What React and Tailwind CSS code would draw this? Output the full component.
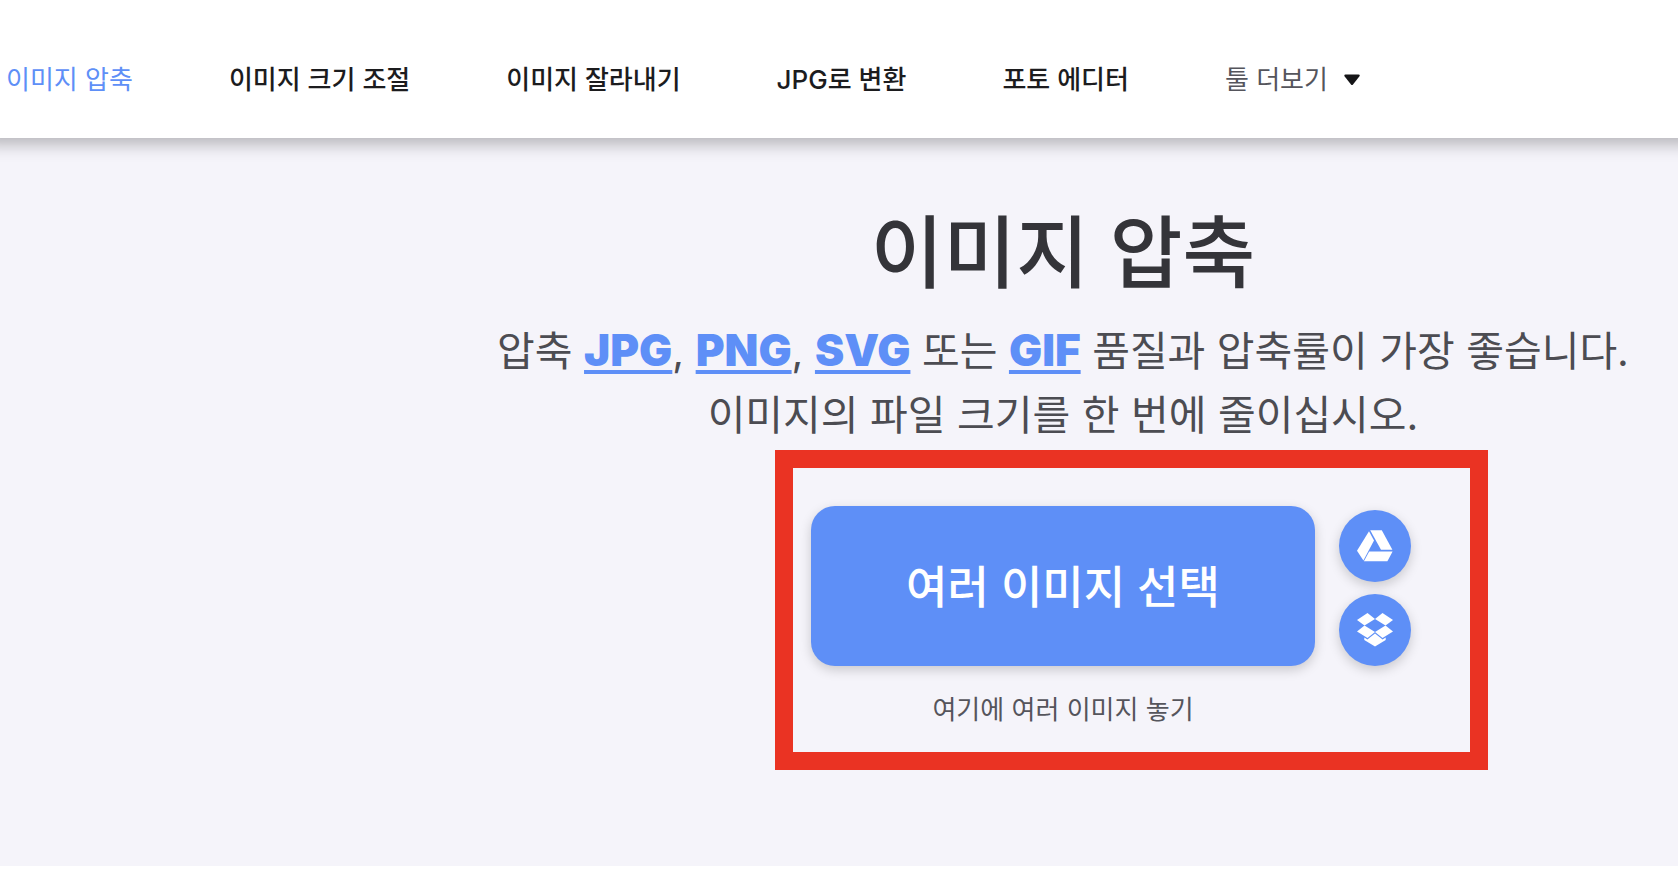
import React from 'react'

const NAV_ITEMS = [
  { label: '이미지 압축', active: true },
  { label: '이미지 크기 조절' },
  { label: '이미지 잘라내기' },
  { label: 'JPG로 변환' },
  { label: '포토 에디터' },
]

function DriveIcon() {
  return (
    <svg viewBox="0 0 36 32" className="w-9 h-8" fill="currentColor" aria-hidden="true">
      <path d="M13.2 0.3h11.6l10.6 19.5h-11.4z" />
      <path d="M12 1.2 17 10.5 6.4 30.5 0 20.8z" />
      <path d="M12.2 21.5h23.4l-5.2 9.7H6.9z" />
    </svg>
  )
}

function DropboxIcon() {
  return (
    <svg viewBox="0 0 36 34" className="w-9 h-8.5" fill="currentColor" aria-hidden="true">
      <path d="M10.5 0 18 6 7.5 12.5 0 7z" />
      <path d="M25.5 0 36 7l-7.5 5.5L18 6z" />
      <path d="M7.5 12.5 18 19l-7.5 6L0 18.5z" />
      <path d="M28.5 12.5 36 18.5 25.5 25 18 19z" />
      <path d="M18 20.4 25.6 26.4 28.7 24.6V27L18 33.4 7.3 27V24.6L10.4 26.4z" />
    </svg>
  )
}

function FormatLink({ children }) {
  return (
    <a href="#" className="font-[Inter] font-black text-[44px] text-[#5e8ff7] underline decoration-4 underline-offset-4 [text-decoration-skip-ink:none]">
      {children}
    </a>
  )
}

function SourceButton({ label, children }) {
  return (
    <button
      type="button"
      aria-label={label}
      className="flex size-18 items-center justify-center rounded-full bg-[#5e8ff7] text-white shadow-[0_4px_12px_rgba(0,0,0,0.18)]"
    >
      {children}
    </button>
  )
}

function Header() {
  return (
    <header className="relative z-10 bg-white px-1.5 pt-[67px] pb-[45px] shadow-[0_-10px_16px_16px_rgba(0,0,0,0.27)]">
      <nav className="flex items-center gap-24 whitespace-nowrap text-[26px] leading-[26px]">
        {NAV_ITEMS.map((item) => (
          <a key={item.label} href="#" className={item.active ? 'text-[#5e8ff7]' : 'font-medium text-[#1c1c1e]'}>
            {item.label}
          </a>
        ))}
        <button type="button" className="flex items-center gap-4 text-[#55555c]">
          툴 더보기
          <svg viewBox="0 0 16 11" className="w-4 h-3 text-[#151517]" fill="currentColor" aria-hidden="true">
            <path d="M1.5 0h13q2 0.2 0.8 2L9 10q-1 1-2 0L0.7 2Q-0.4 0.2 1.5 0z" />
          </svg>
        </button>
      </nav>
    </header>
  )
}

function Uploader() {
  return (
    <div className="mt-[3px] ml-[775px] mr-[190px] flex items-start gap-6 border-[18px] border-[#ea3323] px-[18px] pt-[38px] pb-6">
      <div className="flex flex-1 flex-col items-center gap-[26px]">
        <button
          type="button"
          className="h-40 w-full rounded-3xl bg-[#5e8ff7] pt-1 text-[45px] font-medium text-white shadow-[0_4px_12px_rgba(0,0,0,0.18)]"
        >
          여러 이미지 선택
        </button>
        <p className="text-[26px] leading-9 text-[#55555c]">여기에 여러 이미지 놓기</p>
      </div>
      <div className="mr-[41px] flex flex-col gap-3 pt-1">
        <SourceButton label="Google Drive"><DriveIcon /></SourceButton>
        <SourceButton label="Dropbox"><DropboxIcon /></SourceButton>
      </div>
    </div>
  )
}

export default function App() {
  return (
    <div className="min-h-screen bg-white font-['Inter','Noto_Sans_CJK_KR',sans-serif]">
      <Header />
      <main className="bg-[#f5f4fa] pt-16 pb-24">
        <div className="pl-[448px] text-center">
          <h1 className="text-[79px] leading-[102px] font-medium text-[#343439]">이미지 압축</h1>
          <p className="mt-3.5 text-[41px] leading-16 text-[#4c4c52]">
            압축 <FormatLink>JPG</FormatLink>, <FormatLink>PNG</FormatLink>, <FormatLink>SVG</FormatLink> 또는{' '}
            <FormatLink>GIF</FormatLink> 품질과 압축률이 가장 좋습니다.
            <br />
            이미지의 파일 크기를 한 번에 줄이십시오.
          </p>
        </div>
        <Uploader />
      </main>
    </div>
  )
}
